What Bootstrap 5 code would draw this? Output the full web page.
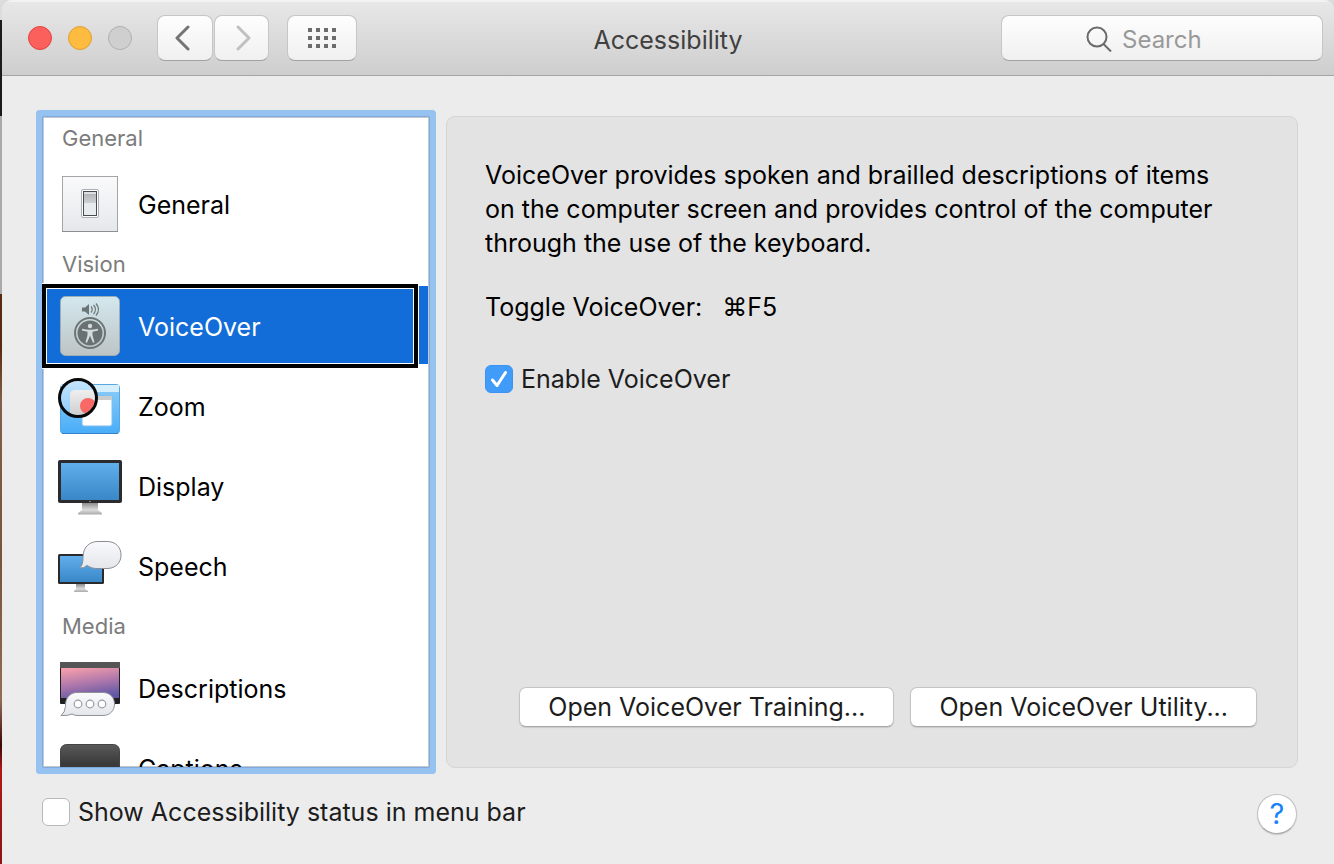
<!DOCTYPE html>
<html lang="en">
<head>
<meta charset="utf-8">
<meta name="viewport" content="width=device-width, initial-scale=1">
<title>Accessibility</title>
<link href="https://cdn.jsdelivr.net/npm/bootstrap@5.3.0/dist/css/bootstrap.min.css" rel="stylesheet">
<style>
  body {
    font-family: Inter, "Liberation Sans", sans-serif;
    font-size: 25px;
    line-height: 34px;
    color: #000;
    padding-left: 2px;
    background: linear-gradient(#dcdcdc 0 20px, #1b1b1d 20px 116px, #a9a9a9 116px 294px, #5a2a10 294px 348px, #806048 400px, #75563c 560px, #946c55 700px, #3a0808 745px, #b01818 770px, #8a1414 864px);
  }
  .window { background: #ececec; border-radius: 10px 10px 0 0; overflow: hidden; }
  .titlebar {
    height: 76px;
    padding: 0 11px;
    background: linear-gradient(#e8e8e8, #cecece);
    border-bottom: 1px solid #a5a5a5;
    box-shadow: inset 0 2px 0 #f3f3f3;
  }
  .bar-side { flex: 1 1 0; }
  .lights { padding: 0 25px 0 15px; }
  .light { width: 24px; height: 24px; border-radius: 50%; border: 1px solid; padding: 0; }
  .light-close { background: #fc605c; border-color: #e2443f; }
  .light-min { background: #fdbc40; border-color: #dfa033; }
  .light-off { background: #cfcfcf; border-color: #b0b0b0; }
  .tool {
    height: 46px;
    padding: 0;
    border: 1px solid #c6c6c6;
    border-bottom-color: #a2a2a2;
    border-radius: 8px;
    background: linear-gradient(#fefefe, #f0f0f0);
    display: flex; align-items: center; justify-content: center;
  }
  .nav-pair { gap: 1px; margin-right: 18px; }
  .tool-nav { width: 56px; }
  .tool-nav + .tool-nav { width: 55px; }
  .tool-grid { width: 70px; }
  .tool-search { width: 322px; gap: 8px; }
  .tool-search input { width: 116px; border: 0; padding: 4px 0 0; background: transparent; outline: 0; color: #777; font-size: 24px; }
  .tool-search input::placeholder { color: #999; opacity: 1; }
  .window-title { color: #404040; font-size: 25px; line-height: 34px; font-weight: 400; padding-top: 5px; }
  .content-area { padding: 40px 36px 0 40px; gap: 16px; min-height: 0; }
  .sidebar-list {
    flex: 0 0 388px;
    background: #fff;
    box-shadow: 0 0 0 6px #96c2f2, inset 0 0 0 1px #7fa8db, inset 0 0 0 2px #c3c8ce;
    border-radius: 1px;
    min-height: 0;
    padding-bottom: 1px;
  }
  .scroller { overflow: hidden; height: 100%; padding-top: 2px; }
  .group-title { height: 42px; padding: 3px 20px 0; font-size: 22px; line-height: 34px; color: #7c7c7c; margin: 0; font-weight: 400; }
  .group-title:first-child { height: 46px; }
  .item { height: 80px; padding: 0 2px; position: relative; }
  .item a { height: 78px; padding: 0 14px; gap: 16px; color: #000; text-decoration: none; }
  .item a.chosen { background: #126dd8; color: #fff; }
  .item a span { padding-top: 4px; }
  .item svg { width: 64px; height: 64px; flex: none; }
  .cursor-frame { position: absolute; left: 0; right: 12px; top: -2px; bottom: -2px; border: 4px solid #000; box-shadow: inset 0 0 0 1px #fff, 0 0 0 1px #fff; pointer-events: none; }
  .pane { background: #e3e3e3; border: 1px solid #d5d5d5; border-radius: 9px; padding: 41px 40px 40px 38px; min-width: 0; }
  .toggle-line { margin: 30px 0 38px; gap: 20px; }
  .push {
    height: 40px; padding: 0 28px; background: #fff; color: #1c1c1c; border: 1px solid #c4c4c4; border-bottom-color: #a9a9a9;
    border-radius: 7px; box-shadow: 0 1px 1px #c8c8c8; line-height: 36px; white-space: nowrap;
  }
  .tick { appearance: none; width: 28px; height: 28px; flex: none; margin: 0; border: 1px solid #b9b9b9; border-radius: 6px; background: #fff; }
  .tick:checked { border-color: #3b93f6; background: #419bf9 url("data:image/svg+xml,%3Csvg xmlns='http://www.w3.org/2000/svg' viewBox='0 0 26 26'%3E%3Cpath d='M6.500 14l4.500 5.500L19.500 6.500' fill='none' stroke='%23fff' stroke-width='3' stroke-linecap='round' stroke-linejoin='round'/%3E%3C/svg%3E") center/100% no-repeat; }
  .opt { gap: 8px; color: #1c1c1c; }
  .footer-bar { height: 96px; padding: 0 37px 4px 40px; }
  .help { width: 40px; height: 40px; border-radius: 50%; border: 1px solid #c2c2c2; border-bottom-color: #a9a9a9; background: #fff; box-shadow: 0 1px 1px #c8c8c8; color: #1a82fb; padding: 0; font-size: 29px; line-height: 36px; }
</style>
</head>
<body>
<div class="window vh-100 d-flex flex-column">
  <header class="titlebar d-flex align-items-center flex-shrink-0">
    <div class="bar-side d-flex align-items-center">
      <div class="lights d-flex gap-3">
        <button class="light light-close" aria-label="Close"></button>
        <button class="light light-min" aria-label="Minimize"></button>
        <button class="light light-off" aria-label="Full screen" disabled></button>
      </div>
      <div class="nav-pair d-flex">
        <button class="tool tool-nav" aria-label="Back"><svg width="20" height="28" viewBox="0 0 20 28" fill="none" stroke="#747474" stroke-width="3" stroke-linecap="round" stroke-linejoin="round"><path d="M13 3L2 14L13 25"/></svg></button>
        <button class="tool tool-nav" aria-label="Forward"><svg width="20" height="28" viewBox="0 0 20 28" fill="none" stroke="#c0c0c0" stroke-width="3" stroke-linecap="round" stroke-linejoin="round"><path d="M6 3L17 14L6 25"/></svg></button>
      </div>
      <button class="tool tool-grid" aria-label="Show all"><svg width="28" height="20" viewBox="0 0 28 20" fill="#6c6c6c"><path d="M0 0h4v4h-4zM8 0h4v4h-4zM16 0h4v4h-4zM24 0h4v4h-4zM0 8h4v4h-4zM8 8h4v4h-4zM16 8h4v4h-4zM24 8h4v4h-4zM0 16h4v4h-4zM8 16h4v4h-4zM16 16h4v4h-4zM24 16h4v4h-4z"/></svg></button>
    </div>
    <h1 class="window-title m-0">Accessibility</h1>
    <div class="bar-side d-flex justify-content-end">
      <label class="tool tool-search"><svg width="28" height="28" viewBox="0 0 28 28" fill="none" stroke="#6a6a6a" stroke-width="2"><circle cx="11" cy="13" r="9.500"/><path d="M17.500 20L25 27.500"/></svg><input type="search" placeholder="Search" aria-label="Search"></label>
    </div>
  </header>

  <main class="content-area d-flex flex-fill">
    <nav class="sidebar-list">
      <div class="scroller">
        <h2 class="group-title">General</h2>
        <div class="item"><a href="#" class="d-flex align-items-center">
          <svg viewBox="0 0 64 64"><defs><linearGradient id="plate" x2="0" y2="1"><stop stop-color="#fafafb"/><stop offset="1" stop-color="#e5e8eb"/></linearGradient><linearGradient id="rock" x2="0" y2="1"><stop offset=".1" stop-color="#dcdfe1"/><stop offset=".11" stop-color="#b4b7b9"/><stop offset=".46" stop-color="#ccd0d2"/><stop offset=".47" stop-color="#e8ebee"/></linearGradient></defs><rect x="4.500" y="5.500" width="55" height="55" fill="url(#plate)" stroke="#a5a5a7"/><path d="M4 60.500h56" stroke="#8c8e91"/><rect x="23.500" y="18.500" width="17" height="28" rx="1.500" fill="#fff" stroke="#adb0b3"/><rect x="25.500" y="20.500" width="13" height="24" fill="url(#rock)" stroke="#474a50"/></svg>
          <span>General</span></a></div>
        <h2 class="group-title">Vision</h2>
        <div class="item"><a href="#" class="d-flex align-items-center chosen" aria-current="page">
          <svg viewBox="0 0 64 64"><defs><linearGradient id="vo" x2="0" y2="1"><stop stop-color="#d3e8ee"/><stop offset="1" stop-color="#bdc4c5"/></linearGradient></defs><rect x="2.500" y="3.500" width="59" height="59" rx="5" fill="url(#vo)" stroke="#9fadb4"/><g fill="none" stroke="#6c7576" stroke-width="1.200"><path d="M33 13.500q2.500 3 0 6M35.500 12q4 4.500 0 9M38 10.500q5 6 0 12"/><circle cx="32" cy="40" r="15" stroke-width="2"/></g><path d="M24 14.500h3l4-3.500v11l-4-3.500h-3z" fill="#6c7576"/><circle cx="32" cy="40" r="12.500" fill="#697172"/><circle cx="32" cy="33" r="2.200" fill="#d2dcde"/><path d="M24 35.800q8 1.800 16 0v1.800l-5.500 1.200v3.500l2 7-1.500.5-3-7-3 7-1.500-.5 2-7v-3.500L24 37.600z" fill="#d2dcde"/></svg>
          <span>VoiceOver</span></a><div class="cursor-frame"></div></div>
        <div class="item"><a href="#" class="d-flex align-items-center">
          <svg viewBox="0 0 64 64"><defs><linearGradient id="zm" x2="0" y2="1"><stop stop-color="#8ccdf7"/><stop offset="1" stop-color="#49adf9"/></linearGradient><linearGradient id="lens" x2="0" y2="1"><stop stop-color="#c5e6ff"/><stop offset="1" stop-color="#8acafa"/></linearGradient><linearGradient id="gl" x2="0" y2="1"><stop stop-color="#efefef"/><stop offset="1" stop-color="#ccc"/></linearGradient><clipPath id="lc"><circle cx="20" cy="25" r="17"/></clipPath></defs><rect x="2.500" y="11.500" width="59" height="49" rx="3" fill="url(#zm)" stroke="#59a7e0"/><path d="M3 12h58v7H3z" fill="#d5effd"/><path d="M4 60.500h56" stroke="#3583c5"/><rect x="24" y="23" width="30" height="30" rx="2" fill="#fff" stroke="#7dbdec"/><path d="M24 23h30v4H24z" fill="#ccc"/><g clip-path="url(#lc)"><circle cx="20" cy="25" r="18" fill="url(#lens)"/><path d="M12 44V22q0-5 5-5h25v27z" fill="url(#gl)"/><circle cx="30" cy="33" r="8" fill="#fa6965"/></g><circle cx="20" cy="25" r="18.500" fill="none" stroke="#080808" stroke-width="3"/></svg>
          <span>Zoom</span></a></div>
        <div class="item"><a href="#" class="d-flex align-items-center">
          <svg viewBox="0 -1 64 64"><defs><linearGradient id="scr" x2="0" y2="1"><stop stop-color="#60aeec"/><stop offset="1" stop-color="#3a87c7"/></linearGradient><linearGradient id="std" x2="0" y2="1"><stop stop-color="#8e8e8e"/><stop offset=".6" stop-color="#dcdcdc"/><stop offset="1" stop-color="#aaa"/></linearGradient></defs><rect x="0" y="6" width="64" height="43" rx="2" fill="#2b2b2d"/><rect x="3" y="9" width="58" height="37" fill="url(#scr)"/><circle cx="32" cy="47.500" r=".8" fill="#999"/><path d="M24 49h16v7l4 3v1.500H20V59l4-3z" fill="url(#std)"/></svg>
          <span>Display</span></a></div>
        <div class="item"><a href="#" class="d-flex align-items-center">
          <svg viewBox="0 -1 64 64"><defs><linearGradient id="bub" x2="0" y2="1"><stop stop-color="#fafafc"/><stop offset="1" stop-color="#e4e6eb"/></linearGradient></defs><rect y="20" width="46" height="30" rx="1.500" fill="#2b2b2d"/><rect x="2" y="22" width="42" height="26" fill="url(#scr)"/><path d="M18 50h9v5l3 2v1H16v-1l2-2z" fill="url(#std)"/><path d="M40 7.500h9c9 0 14 6 14 13.500S58 34.500 49 34.500H38c-4 0-7-2-9-3q-3 3-7.500 2.500Q25 31.500 25 23.500C25 13.500 31 7.500 40 7.500z" fill="url(#bub)" stroke="#8a8d95"/></svg>
          <span>Speech</span></a></div>
        <h2 class="group-title">Media</h2>
        <div class="item"><a href="#" class="d-flex align-items-center">
          <svg viewBox="0 -1 64 64"><defs><linearGradient id="dusk" x1=".3" x2=".6" y2="1"><stop stop-color="#f19cab"/><stop offset=".5" stop-color="#ae77ab"/><stop offset="1" stop-color="#5f57a5"/></linearGradient></defs><rect x="2" y="6" width="60" height="42" rx="1" fill="#202022"/><path d="M2 7q0-1 1-1h58q1 0 1 1v5H2z" fill="#555"/><rect x="3" y="12" width="58" height="30" fill="url(#dusk)"/><path d="M19 36.500h26c7 0 11.500 5 11.500 11.500S52 59.500 45 59.500H20q-4 0-6-1.500-4 2-11 1.500 4-3 4.500-9C7 42 12 36.500 19 36.500z" fill="url(#bub)" stroke="#8f9299"/><g fill="#fff" stroke="#999ba0" stroke-width="1.200"><circle cx="20" cy="48" r="3.800"/><circle cx="32" cy="48" r="3.800"/><circle cx="44" cy="48" r="3.800"/></g></svg>
          <span>Descriptions</span></a></div>
        <div class="item"><a href="#" class="d-flex align-items-center">
          <svg viewBox="0 -1 64 64"><defs><linearGradient id="cap" x2="0" y2="1"><stop stop-color="#5a5a5a"/><stop offset=".4" stop-color="#3a3a3a"/></linearGradient></defs><rect x="2.500" y="8.500" width="59" height="48" rx="6" fill="url(#cap)" stroke="#444"/></svg>
          <span>Captions</span></a></div>
      </div>
    </nav>

    <section class="pane flex-fill d-flex flex-column">
      <p class="mb-0">VoiceOver provides spoken and brailled descriptions of items<br>on the computer screen and provides control of the computer<br>through the use of the keyboard.</p>
      <p class="toggle-line d-flex"><span>Toggle VoiceOver:</span><span>⌘F5</span></p>
      <label class="opt d-flex align-items-center"><input class="tick" type="checkbox" checked>Enable VoiceOver</label>
      <div class="d-flex justify-content-end gap-3 mt-auto">
        <button class="push">Open VoiceOver Training...</button>
        <button class="push">Open VoiceOver Utility...</button>
      </div>
    </section>
  </main>

  <footer class="footer-bar d-flex align-items-center justify-content-between flex-shrink-0">
    <label class="opt d-flex align-items-center mb-1"><input class="tick" type="checkbox">Show Accessibility status in menu bar</label>
    <button class="help" aria-label="Help">?</button>
  </footer>
</div>
<script src="https://cdn.jsdelivr.net/npm/bootstrap@5.3.0/dist/js/bootstrap.bundle.min.js"></script>
</body>
</html>
